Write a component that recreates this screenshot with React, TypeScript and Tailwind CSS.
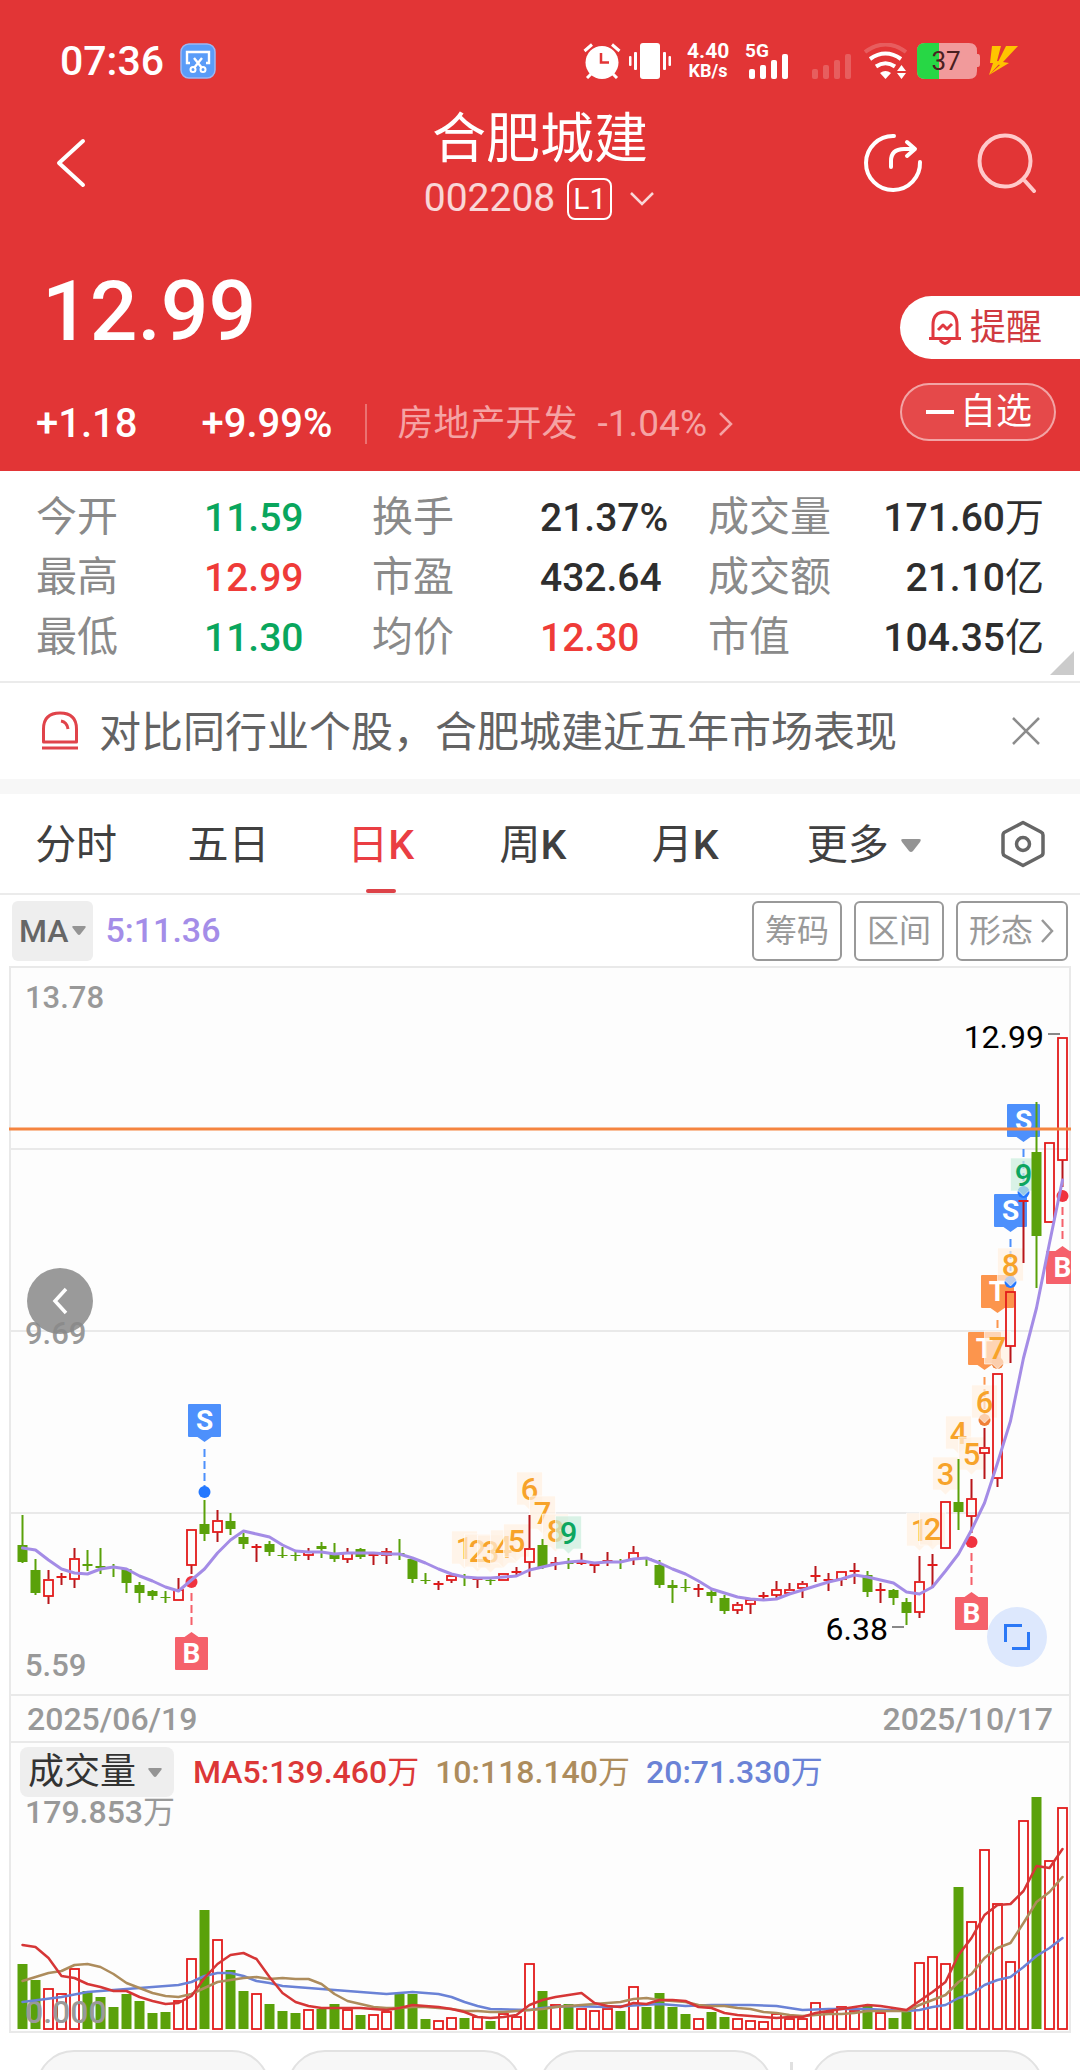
import type { ReactNode } from "react";

type Candle = [up: 0 | 1, top: number, bottom: number, high: number, low: number];
type Point = [index: number, y: number];

const RED = "#e31b1b";
const WICK = "#b8161b";
const GREEN = "#5aa10a";

const xAt = (i: number) => 22.5 + i * 13;

// body top / bottom, high / low, all on the chart's vertical axis
const candles: Candle[] = [
  [0, 1545, 1562, 1515, 1563], [0, 1570, 1593, 1559, 1595], [1, 1579, 1596, 1570, 1604], [1, 1576, 1577, 1573, 1585],
  [1, 1558, 1579, 1548, 1588], [0, 1564, 1566, 1550, 1571], [0, 1566, 1568, 1548, 1574], [0, 1567, 1568, 1564, 1577],
  [0, 1569, 1583, 1568, 1593], [0, 1585, 1593, 1582, 1603], [0, 1591, 1596, 1590, 1600], [0, 1597, 1598, 1591, 1603],
  [1, 1589, 1600, 1578, 1600], [1, 1529, 1565, 1529, 1574], [0, 1524, 1534, 1500, 1541], [1, 1520, 1532, 1510, 1542],
  [0, 1521, 1529, 1513, 1535], [0, 1537, 1544, 1533, 1549], [1, 1546, 1547, 1544, 1562], [0, 1544, 1552, 1541, 1556],
  [0, 1555, 1556, 1547, 1558], [0, 1555, 1556, 1552, 1561], [1, 1551, 1555, 1548, 1560], [0, 1546, 1549, 1542, 1558],
  [0, 1553, 1559, 1543, 1562], [1, 1552, 1559, 1548, 1563], [0, 1549, 1557, 1548, 1559], [1, 1554, 1555, 1554, 1565],
  [1, 1551, 1555, 1548, 1564], [0, 1553, 1554, 1539, 1560], [0, 1559, 1579, 1558, 1583], [0, 1580, 1581, 1573, 1584],
  [1, 1583, 1584, 1581, 1590], [1, 1575, 1580, 1573, 1583], [0, 1576, 1577, 1574, 1586], [1, 1578, 1579, 1577, 1588],
  [0, 1580, 1581, 1577, 1585], [1, 1573, 1580, 1573, 1580], [1, 1571, 1572, 1567, 1577], [1, 1548, 1562, 1515, 1577],
  [0, 1545, 1567, 1539, 1569], [1, 1562, 1564, 1557, 1570], [0, 1563, 1564, 1558, 1569], [1, 1562, 1564, 1553, 1565],
  [1, 1564, 1565, 1563, 1573], [1, 1560, 1561, 1552, 1566], [0, 1561, 1562, 1559, 1569], [1, 1552, 1559, 1546, 1565],
  [0, 1558, 1559, 1557, 1566], [0, 1565, 1585, 1560, 1588], [0, 1585, 1588, 1580, 1603], [0, 1587, 1588, 1579, 1592],
  [1, 1588, 1589, 1584, 1597], [0, 1592, 1596, 1590, 1603], [0, 1598, 1611, 1595, 1614], [1, 1604, 1610, 1602, 1614],
  [1, 1599, 1604, 1598, 1614], [1, 1595, 1596, 1592, 1600], [1, 1589, 1595, 1581, 1598], [1, 1589, 1593, 1583, 1595],
  [1, 1583, 1588, 1581, 1598], [1, 1575, 1576, 1566, 1582], [1, 1579, 1580, 1573, 1591], [1, 1571, 1579, 1571, 1586],
  [1, 1570, 1571, 1563, 1584], [0, 1575, 1592, 1571, 1597], [1, 1589, 1590, 1583, 1603], [0, 1590, 1598, 1589, 1605],
  [0, 1602, 1613, 1598, 1625], [1, 1581, 1612, 1556, 1618], [1, 1564, 1565, 1554, 1588], [1, 1501, 1548, 1501, 1548],
  [0, 1502, 1512, 1459, 1530], [1, 1498, 1516, 1479, 1533], [1, 1447, 1453, 1428, 1479], [1, 1373, 1478, 1373, 1487],
  [1, 1291, 1346, 1291, 1363], [1, 1200, 1201, 1200, 1263], [0, 1152, 1236, 1102, 1288], [1, 1142, 1222, 1142, 1222],
  [1, 1037, 1160, 1037, 1187],
];

const ma5 = [
  1548, 1550, 1560, 1569, 1573, 1574, 1569, 1567, 1569, 1576, 1581, 1587, 1591, 1580, 1569, 1553, 1540, 1531, 1534, 1537,
  1545, 1551, 1552, 1552, 1554, 1553, 1553, 1553, 1554, 1554, 1558, 1563, 1569, 1574, 1577, 1578, 1578, 1577, 1576, 1570,
  1567, 1564, 1562, 1561, 1563, 1562, 1562, 1559, 1558, 1563, 1569, 1574, 1581, 1589, 1593, 1597, 1599, 1600, 1599, 1594,
  1590, 1586, 1582, 1579, 1575, 1577, 1580, 1583, 1592, 1594, 1587, 1571, 1554, 1530, 1503, 1463, 1421, 1358, 1308, 1243,
  1180,
];

const volumeTops = [
  1964, 1980, 1988, 1993, 1968, 1991, 1997, 2007, 1994, 2001, 2013, 2012, 2000, 1958, 1910, 1939, 1970, 1991, 1993, 2004,
  2011, 2013, 2009, 2009, 2004, 2009, 2015, 2014, 2011, 1994, 1994, 2019, 2020, 2017, 2018, 2016, 2021, 2013, 2016, 1963,
  1991, 2004, 2004, 2008, 2010, 2008, 2011, 1986, 2007, 1993, 2007, 2014, 2018, 2012, 2017, 2018, 2020, 2021, 2013, 2018,
  2018, 2002, 2011, 2006, 2010, 2005, 2012, 2018, 2012, 1962, 1956, 1963, 1887, 1921, 1849, 1903, 1961, 1820, 1797, 1860,
  1807,
];

const volumeMa5 = [
  1945, 1947, 1958, 1976, 1978, 1984, 1987, 1991, 1991, 1997, 2001, 2004, 2003, 1996, 1978, 1964, 1955, 1953, 1959, 1977,
  1993, 2002, 2006, 2008, 2008, 2008, 2008, 2009, 2010, 2008, 2005, 2006, 2007, 2009, 2012, 2017, 2018, 2017, 2015, 2005,
  2000, 1997, 1995, 1993, 2003, 2006, 2007, 2003, 2004, 2000, 2000, 2001, 2007, 2008, 2013, 2015, 2016, 2017, 2018, 2017,
  2017, 2013, 2011, 2009, 2007, 2005, 2006, 2008, 2010, 2001, 1992, 1982, 1955, 1938, 1915, 1905, 1904, 1891, 1866, 1868,
  1849,
];

const volumeMa10 = [
  1981, 1977, 1973, 1971, 1965, 1964, 1967, 1974, 1983, 1988, 1993, 1996, 1997, 1994, 1988, 1982, 1980, 1978, 1977, 1979,
  1978, 1979, 1979, 1984, 1994, 2001, 2004, 2007, 2008, 2008, 2007, 2007, 2008, 2009, 2011, 2011, 2012, 2012, 2011, 2010,
  2009, 2007, 2006, 2005, 2004, 2003, 2002, 1999, 1998, 2000, 2001, 2002, 2005, 2006, 2006, 2008, 2009, 2012, 2013, 2015,
  2016, 2015, 2014, 2014, 2013, 2011, 2011, 2011, 2011, 2005, 2000, 1995, 1982, 1974, 1958, 1948, 1943, 1923, 1902, 1892,
  1877,
];

const volumeMa20: Point[] = [
  [0, 2002], [3, 1997], [5, 1992], [7, 1990], [10, 1987], [12, 1985], [13, 1982], [14, 1976], [15, 1973], [16, 1973],
  [17, 1976], [18, 1981], [19, 1983], [20, 1986], [22, 1988], [24, 1990], [26, 1992], [28, 1994], [30, 1992], [32, 1994],
  [33, 1997], [34, 2002], [35, 2006], [36, 2009], [39, 2010], [40, 2008], [42, 2006], [45, 2007], [49, 2004], [51, 2006],
  [53, 2005], [56, 2005], [58, 2006], [60, 2010], [62, 2009], [65, 2009], [68, 2011], [69, 2010], [70, 2007], [71, 2005],
  [72, 1998], [73, 1994], [74, 1985], [75, 1980], [76, 1977], [77, 1967], [78, 1956], [79, 1948], [80, 1938],
];

const sequence: [label: string, index: number, top: number][] = [
  ["1", 34, 1531], ["2", 35, 1534], ["3", 36, 1535], ["4", 37, 1530], ["5", 38, 1524], ["6", 39, 1472], ["7", 40, 1496],
  ["8", 41, 1514], ["9", 42, 1516], ["1", 69, 1513], ["2", 70, 1512], ["3", 71, 1457], ["4", 72, 1416], ["5", 73, 1437],
  ["6", 74, 1385], ["7", 75, 1331], ["8", 76, 1248], ["9", 77, 1158],
];

// S and T flags hang above their dot, B flags stand below it
const flags: { label: string; index: number; dot: number }[] = [
  { label: "S", index: 14, dot: 1492 },
  { label: "B", index: 13, dot: 1582 },
  { label: "B", index: 73, dot: 1542 },
  { label: "T", index: 74, dot: 1420 },
  { label: "T", index: 75, dot: 1363 },
  { label: "S", index: 76, dot: 1282 },
  { label: "S", index: 77, dot: 1192 },
  { label: "B", index: 80, dot: 1196 },
];

const flagColors: Record<string, [string, string]> = {
  S: ["#4d90fc", "#2478ff"],
  T: ["#fc954d", "#f08038"],
  B: ["#f5616b", "#f0323f"],
};

const line = (ys: number[]) => ys.map((y, i) => `${xAt(i)},${y}`).join(" ");
const sparseLine = (points: Point[]) => points.map(([i, y]) => `${xAt(i)},${y}`).join(" ");

function Flag({ label, index, dot }: { label: string; index: number; dot: number }) {
  const x = xAt(index);
  const [fill, dotFill] = flagColors[label];
  const below = label === "B";
  const top = below ? dot + 55 : dot - 88;
  const tip = below
    ? `${x - 7},${top} ${x},${top - 5} ${x + 7},${top}`
    : `${x - 7},${top + 33} ${x},${top + 38} ${x + 7},${top + 33}`;
  return (
    <g>
      <line x1={x} x2={x} y1={below ? dot + 11 : dot - 43} y2={below ? dot + 47 : dot - 4} stroke={fill} strokeWidth={2} strokeDasharray="8 4" />
      <circle cx={x} cy={dot} r={6} fill={dotFill} />
      <rect x={x - 16.5} y={top} width={33} height={33} rx={1} fill={fill} />
      <polygon points={tip} fill={fill} />
      <text x={x} y={top + 26} textAnchor="middle" fontSize={28} fontWeight={700} fill="#fff">{label}</text>
    </g>
  );
}

function SequenceTag({ label, index, top }: { label: string; index: number; top: number }) {
  const x = xAt(index);
  const nine = label === "9";
  return (
    <g>
      <path
        d={`M${x - 13} ${top}h26v33h-8l-5 5l-5 -5h-8z`}
        fill={nine ? "#c9ecdc" : "#fff0e0"}
        fillOpacity={0.7}
        stroke="#fff"
        strokeOpacity={0.6}
        strokeWidth={1}
      />
      <text x={x} y={top + 28} textAnchor="middle" fontSize={31} fontWeight={500} fill={nine ? "#0da65f" : "#f7a32a"}>{label}</text>
    </g>
  );
}

function PriceChart() {
  return (
    <svg viewBox="0 966 1080 730" className="block w-full" fontFamily="Roboto, sans-serif">
      <clipPath id="plot">
        <rect x={9} y={966} width={1062} height={730} />
      </clipPath>
      <rect x={10} y={967} width={1060} height={728} fill="#fdfdfd" stroke="#e9e9e9" strokeWidth={2} />
      {[1149, 1331, 1513].map((y) => (
        <line key={y} x1={10} x2={1070} y1={y} y2={y} stroke="#e9e9e9" strokeWidth={2} />
      ))}

      <g fill="#999" fontSize={31} fontWeight={500}>
        <text x={25} y={1008}>13.78</text>
        <text x={25} y={1344}>9.69</text>
        <text x={25} y={1676}>5.59</text>
      </g>
      <g fill="#000" fontSize={32}>
        <text x={1044} y={1048} textAnchor="end">12.99</text>
        <text x={888} y={1640} textAnchor="end">6.38</text>
      </g>
      <path d="M1048 1034h12M892 1627h12" stroke="#888" strokeWidth={2} />

      <g clipPath="url(#plot)">
        {flags.map((f) => <Flag key={f.index} {...f} />)}
      </g>
      {sequence.map(([label, index, top]) => <SequenceTag key={index} label={label} index={index} top={top} />)}

      {candles.map(([up, top, bottom, high, low], i) => {
        const x = xAt(i);
        if (!up) {
          return (
            <g key={i} fill={GREEN}>
              <rect x={x - 5} y={top} width={10} height={bottom - top} />
              <rect x={x - 1} y={high} width={2} height={low - high} />
            </g>
          );
        }
        return (
          <g key={i}>
            {high < top && <rect x={x - 1} y={high} width={2} height={top - high} fill={WICK} />}
            {low > bottom && <rect x={x - 1} y={bottom} width={2} height={low - bottom} fill={WICK} />}
            {bottom - top <= 2 ? (
              <rect x={x - 5} y={top} width={10} height={2} fill={RED} />
            ) : (
              <rect x={x - 4.5} y={top + 1} width={9} height={bottom - top - 1} fill="none" stroke={RED} strokeWidth={1.8} />
            )}
          </g>
        );
      })}

      <polyline points={line(ma5)} fill="none" stroke="#a48ce6" strokeWidth={3} strokeLinejoin="round" strokeLinecap="round" />
      <line x1={9} x2={1071} y1={1129} y2={1129} stroke="#f5843f" strokeWidth={3} />
    </svg>
  );
}

function VolumeChart() {
  return (
    <svg viewBox="0 1797 1080 237" className="block w-full overflow-visible" fontFamily="Roboto, 'Noto Sans CJK SC', sans-serif">
      <path d="M10 1797V2032H1070V1797" fill="#fdfdfd" stroke="#e9e9e9" strokeWidth={2} />
      <text x={25} y={1823} fill="#999" fontSize={32} fontWeight={500}>
        179.853<tspan fontWeight={400}>万</tspan>
      </text>
      {volumeTops.map((top, i) =>
        candles[i][0] ? (
          <rect key={i} x={xAt(i) - 4.5} y={top + 1} width={9} height={2028 - top} fill="#fff" stroke={RED} strokeWidth={1.8} />
        ) : (
          <rect key={i} x={xAt(i) - 5} y={top} width={10} height={2029 - top} fill={GREEN} />
        ),
      )}
      <text x={25} y={2023} fill="#999" fontSize={32} fontWeight={500}>0.000</text>
      <g fill="none" strokeWidth={2.5} strokeLinejoin="round" strokeLinecap="round">
        <polyline points={sparseLine(volumeMa20)} stroke="#6a82d6" />
        <polyline points={line(volumeMa10)} stroke="#ad8c5c" />
        <polyline points={line(volumeMa5)} stroke="#d63636" />
      </g>
    </svg>
  );
}

function StatusBar() {
  return (
    <div className="flex h-10 items-center justify-between pr-[60px] pl-[60px]">
      <div className="flex items-center gap-4">
        <span className="text-[41px] leading-10 font-medium">07:36</span>
        <svg className="h-9 w-9" viewBox="0 0 36 36" fill="none" stroke="#fff" strokeWidth="2.4">
          <rect x="1" y="1" width="34" height="34" rx="8" fill="#5a9cf8" stroke="#9ab8f5" strokeWidth="1.5" />
          <path d="M10 20H7V9h22v11h-3M14 15l8 10M22 15l-8 10" />
          <circle cx="13" cy="26.500" r="2.500" strokeWidth="2" />
          <circle cx="23" cy="26.500" r="2.500" strokeWidth="2" />
        </svg>
      </div>

      <div className="flex items-center">
        <svg className="h-9 w-[38px]" viewBox="0 0 38 36" fill="none" stroke="#fff" strokeWidth="3">
          <circle cx="19" cy="19.500" r="16.500" fill="#fff" stroke="none" />
          <path d="M1.500 8L9 1.500M36.500 8L29 1.500M8 31l-4 4M30 31l4 4" />
          <path d="M18 10v9.500h8" stroke="#e23536" strokeWidth="2.500" />
        </svg>
        <svg className="ml-2 h-9 w-[42px]" viewBox="0 0 42 36" fill="#fff">
          <rect x="11" width="20" height="36" rx="3" />
          <rect x="5" y="9" width="3" height="18" rx="1" />
          <rect x="34" y="9" width="3" height="18" rx="1" />
          <rect y="13" width="2.500" height="10" rx="1" />
          <rect x="39.500" y="13" width="2.500" height="10" rx="1" />
        </svg>
        <div className="ml-4 w-[42px] text-center text-[21px] leading-5 font-bold">
          <div>4.40</div>
          <div className="text-[18px] leading-5">KB/s</div>
        </div>
        <svg className="ml-[17px] h-9 w-11 overflow-visible" viewBox="0 0 44 36" fill="#fff" fontFamily="Roboto, sans-serif">
          <text x="-1" y="14" fontSize="19" fontWeight="700">5G</text>
          <rect x="3" y="26" width="6" height="10" rx="2" />
          <rect x="14" y="22" width="6" height="14" rx="2" />
          <rect x="25" y="17" width="6" height="19" rx="2" />
          <rect x="36" y="11" width="6" height="25" rx="2" />
        </svg>
        <svg className="ml-[22px] h-9 w-10 opacity-20" viewBox="0 0 40 36" fill="#fff">
          <rect y="26" width="6" height="10" rx="2" />
          <rect x="11" y="22" width="6" height="14" rx="2" />
          <rect x="22" y="17" width="6" height="19" rx="2" />
          <rect x="33" y="11" width="6" height="25" rx="2" />
        </svg>
        <svg className="ml-3 h-9 w-11" viewBox="0 0 44 36" fill="none" stroke="#fff" strokeWidth="4">
          <path d="M1 9Q21.500 -6 42 9" opacity=".2" />
          <path d="M6 16Q21.500 5 37 16M12 23.500Q21.500 17 31 23.500" />
          <path d="M16 30q5.500-4 11 0l-5.500 6z" fill="#fff" stroke="none" />
          <path d="M33 28l4.500-6l4.500 6zM33 30l4.500 6l4.500-6z" fill="#fff" stroke="none" />
        </svg>
        <svg className="ml-[9px] h-9 w-[63px]" viewBox="0 0 63 36" fontFamily="Roboto, sans-serif">
          <path d="M8 0h44q8 0 8 8v3h1q2 0 2 3v7q0 3-2 3h-1v4q0 8-8 8H8q-8 0-8-8V8q0-8 8-8z" fill="#f19a9b" />
          <path d="M8 0h14v36H8q-8 0-8-8V8q0-8 8-8z" fill="#27d745" />
          <text x="29" y="27" textAnchor="middle" fontSize="26" fill="#4a2020">37</text>
        </svg>
        <svg className="ml-2 h-[30px] w-8" viewBox="0 0 32 30" fill="#ffc400">
          <path d="M4 0h9L9 15l4 1L1 29L5 17H2zM18 0h12L15 16l6 1L1 29L12 19l-3-1z" />
        </svg>
      </div>
    </div>
  );
}

function Header() {
  return (
    <header className="bg-[#e23536] pt-[41px] text-white">
      <StatusBar />
      <nav className="flex h-[163px] items-center justify-between px-[43px]">
        <button aria-label="返回" className="w-[174px] pl-3">
          <svg className="h-[52px] w-8" viewBox="0 0 32 52" fill="none" stroke="#fff" strokeWidth="4" strokeLinecap="round" strokeLinejoin="round">
            <path d="M28 4L4 26L28 48" />
          </svg>
        </button>
        <div className="flex flex-col items-center pt-3">
          <h1 className="text-[54px] leading-[60px]">合肥城建</h1>
          <button className="flex h-[58px] items-center text-[39px] text-white/80">
            002208
            <span className="ml-3 flex h-[42px] w-[45px] items-center justify-center rounded-lg border-2 border-white text-[30px] text-white">L1</span>
            <svg className="ml-4 h-4 w-7" viewBox="0 0 28 16" fill="none" stroke="currentColor" strokeWidth="2.500">
              <path d="M3 2l11 11L25 2" />
            </svg>
          </button>
        </div>
        <div className="flex w-[174px] items-center justify-between">
          <button aria-label="分享">
            <svg className="h-[60px] w-[60px]" viewBox="0 0 60 60" fill="none" stroke="#fff" strokeWidth="4" strokeLinecap="round" strokeLinejoin="round">
              <path d="M31 3A27 27 0 1 0 57 29" />
              <path d="M28 34V28Q28 16 41 16H51M44 9l8 7l-8 7" />
            </svg>
          </button>
          <button aria-label="搜索" className="text-[#ffc9ca]">
            <svg className="h-[60px] w-[60px]" viewBox="0 0 60 60" fill="none" stroke="currentColor" strokeWidth="4" strokeLinecap="round">
              <circle cx="28" cy="28" r="25.500" />
              <path d="M48 48l9 10" />
            </svg>
          </button>
        </div>
      </nav>

      <section className="flex justify-between">
        <div className="pt-6 pb-[25px] pl-9">
          <div className="pl-[6px] text-[84px] leading-[88px] font-medium">12.99</div>
          <div className="mt-[46px] flex h-11 items-center">
            <span className="text-[40px] font-medium">+1.18</span>
            <span className="ml-16 text-[40px] font-medium">+9.99%</span>
            <span className="ml-8 h-10 w-[2px] bg-white/30" />
            <a href="#sector" className="ml-[31px] flex items-center text-[36px] text-[#f5a3a4]">
              房地产开发
              <span className="ml-5 text-[37px]">-1.04%</span>
              <svg className="ml-[10px] h-6 w-4" viewBox="0 0 16 24" fill="none" stroke="currentColor" strokeWidth="2.500">
                <path d="M3 1l11 11L3 23" />
              </svg>
            </a>
          </div>
        </div>
        <div className="flex flex-col items-start gap-6 pt-[52px]">
          <button className="flex h-[63px] w-[180px] items-center rounded-l-full bg-white pl-7 text-[36px] text-[#d03a40]">
            <svg className="mr-2 h-9 w-[34px]" viewBox="0 0 34 36" fill="none" stroke="#e0383f" strokeWidth="3" strokeLinejoin="round">
              <path d="M5 28V15Q5 2 17 2Q29 2 29 15V28" />
              <path d="M1 28.500h32M12 30q5 7 10 0" />
              <path d="M10 20l5-5l4 4l5-5" />
            </svg>
            提醒
          </button>
          <button className="flex h-[58px] w-[156px] items-center rounded-full border-2 border-white/50 bg-white/10 pl-6 text-[36px]">
            <span className="mr-[6px] h-1 w-7 bg-white" />
            自选
          </button>
        </div>
      </section>
    </header>
  );
}

const stats: [string, string, string][] = [
  ["今开", "11.59", "text-[#09a65d]"],
  ["换手", "21.37%", "text-[#2e2e2e]"],
  ["成交量", "171.60万", "text-[#2e2e2e]"],
  ["最高", "12.99", "text-[#ef3b38]"],
  ["市盈", "432.64", "text-[#2e2e2e]"],
  ["成交额", "21.10亿", "text-[#2e2e2e]"],
  ["最低", "11.30", "text-[#09a65d]"],
  ["均价", "12.30", "text-[#ef3b38]"],
  ["市值", "104.35亿", "text-[#2e2e2e]"],
];

function Stats() {
  return (
    <section className="relative border-b-2 border-[#ebebeb] px-9 pt-[17px] pb-[13px]">
      <dl className="grid grid-cols-3">
        {stats.map(([label, value, color], i) => (
          <div key={label} className={i % 3 === 2 ? "flex h-[60px] items-center justify-between" : "flex h-[60px] items-center"}>
            <dt className={i % 3 === 2 ? "text-[41px] text-[#8a8a8a]" : "w-1/2 text-[41px] text-[#8a8a8a]"}>{label}</dt>
            <dd className={`text-[39px] font-medium ${color}`}>
              {value.replace(/[万亿]/, "")}
              <span className="font-normal">{value.match(/[万亿]/)?.[0]}</span>
            </dd>
          </div>
        ))}
      </dl>
      <svg className="absolute right-[6px] bottom-[6px] h-6 w-6" viewBox="0 0 24 24" fill="#cbcbcb">
        <path d="M24 0v24H0z" />
      </svg>
    </section>
  );
}

function Notice() {
  return (
    <aside className="flex h-24 items-center pr-[38px] pl-10 text-[42px] text-[#636363]">
      <svg className="h-10 w-10 shrink-0" viewBox="0 0 40 40" fill="none" stroke="#e0434a" strokeWidth="3" strokeLinejoin="round">
        <path d="M3.500 31V18Q3.500 2 20 2Q36.500 2 36.500 18V31z" />
        <path d="M2 37h36M21 10q6 1 7 8" />
      </svg>
      <a href="#compare" className="ml-[19px] flex-1 pt-[2px] whitespace-nowrap">对比同行业个股，合肥城建近五年市场表现</a>
      <button aria-label="关闭">
        <svg className="h-7 w-8" viewBox="0 0 32 28" fill="none" stroke="#8c8c8c" strokeWidth="2.500">
          <path d="M3 1l26 26M29 1L3 27" />
        </svg>
      </button>
    </aside>
  );
}

function Caret({ className }: { className: string }) {
  return (
    <svg className={className} viewBox="0 0 20 13" fill="#949494">
      <path d="M2 0h16q3 0 1 3l-7 9q-2 2-4 0L1 3q-2-3 1-3z" />
    </svg>
  );
}

function Tabs() {
  return (
    <nav className="grid h-[101px] grid-cols-[repeat(5,14.1%)_1fr_auto] border-b-2 border-[#ebebeb] text-[41px] text-[#404040]">
      {["分时", "五日", "日", "周", "月"].map((name, i) => (
        <button key={name} className={i === 2 ? "relative pt-1 text-[#ea3e43]" : "relative pt-1"}>
          {name}
          {i > 1 && <span className="font-medium">K</span>}
          {i === 2 && <span className="absolute bottom-0 left-1/2 h-1 w-[30px] -translate-x-1/2 rounded-full bg-[#dd4248]" />}
        </button>
      ))}
      <button className="flex items-center justify-center gap-3 pt-1">
        更多
        <Caret className="h-[13px] w-5" />
      </button>
      <button aria-label="设置" className="flex w-[114px] items-center justify-center">
        <svg className="h-12 w-11" viewBox="0 0 44 48" fill="none" stroke="#666" strokeWidth="3.500" strokeLinejoin="round">
          <path d="M22 2.500L40 12Q42 13 42 15V33Q42 35 40 36L22 45.500L4 36Q2 35 2 33V15Q2 13 4 12z" />
          <circle cx="22" cy="24" r="6.500" />
        </svg>
      </button>
    </nav>
  );
}

function ToolButton({ children }: { children: ReactNode }) {
  return (
    <button className="flex h-[60px] items-center gap-[6px] rounded-md border-2 border-[#999] px-[11px] text-[32px] text-[#999]">
      {children}
    </button>
  );
}

function Toolbar() {
  return (
    <div className="flex h-[71px] items-center gap-3 px-3">
      <button className="flex h-[60px] items-center gap-1 rounded-md bg-[#eeeeee] px-[7px] text-[32px] font-medium text-[#666]">
        MA
        <Caret className="h-[9px] w-[14px]" />
      </button>
      <span className="flex-1 text-[34px] font-medium text-[#a48de8]">5:11.36</span>
      <ToolButton>筹码</ToolButton>
      <ToolButton>区间</ToolButton>
      <ToolButton>
        形态
        <svg className="h-6 w-4" viewBox="0 0 16 24" fill="none" stroke="currentColor" strokeWidth="2.500">
          <path d="M3 1l10 11L3 23" />
        </svg>
      </ToolButton>
    </div>
  );
}

export default function App() {
  return (
    <main className="flex h-screen flex-col overflow-hidden bg-white font-['Roboto','Noto_Sans_CJK_SC',sans-serif] *:shrink-0">
      <Header />
      <Stats />
      <Notice />
      <div className="h-[15px] bg-[#f7f7f7]" />
      <Tabs />
      <Toolbar />

      <section className="relative">
        <PriceChart />
        <button aria-label="更早" className="absolute top-[302px] left-[27px] flex h-[66px] w-[66px] items-center justify-center rounded-full bg-[#888]/85">
          <svg className="h-7 w-4" viewBox="0 0 16 28" fill="none" stroke="#fff" strokeWidth="3.500">
            <path d="M14 2L3 14l11 12" />
          </svg>
        </button>
        <button aria-label="全屏" className="absolute right-[33px] bottom-[29px] flex h-[60px] w-[60px] items-center justify-center rounded-full bg-[#dde8fd]">
          <svg className="h-7 w-7" viewBox="0 0 28 28" fill="none" stroke="#2b78f6" strokeWidth="3">
            <path d="M2.500 19V2.500H19M9 25.500H25.500V9" />
          </svg>
        </button>
      </section>

      <div className="mx-[9px] flex h-[47px] items-center justify-between border-x-2 border-b-2 border-[#e9e9e9] bg-[#fdfdfd] px-4 text-[32px] font-medium text-[#999]">
        <time>2025/06/19</time>
        <time>2025/10/17</time>
      </div>

      <div className="mx-[9px] flex h-[54px] items-end gap-4 border-x-2 border-[#e9e9e9] bg-[#fdfdfd] pl-[9px] text-[32px] leading-[50px] font-medium">
        <button className="flex h-[50px] items-center gap-3 rounded-lg bg-[#eeeeee] px-2 pr-3 text-[36px] font-normal text-[#333]">
          成交量
          <Caret className="h-[9px] w-[14px]" />
        </button>
        <span className="pl-[3px] text-[#dc3737]">MA5:139.460<span className="font-normal">万</span></span>
        <span className="text-[#ad8c5c]">10:118.140<span className="font-normal">万</span></span>
        <span className="text-[#6a82d6]">20:71.330<span className="font-normal">万</span></span>
      </div>
      <VolumeChart />

      <div className="mt-4 flex gap-[17px] px-9">
        <span className="h-[76px] flex-1 rounded-full border-2 border-[#e2e2e2] bg-[#f7f7f7]" />
        <span className="h-[76px] flex-1 rounded-full border-2 border-[#e2e2e2] bg-[#f7f7f7]" />
        <span className="h-[76px] flex-1 rounded-full border-2 border-[#e2e2e2] bg-[#f7f7f7]" />
        <span className="mt-3 h-12 w-[3px] bg-[#e0e0e0]" />
        <span className="h-[76px] flex-1 rounded-full border-2 border-[#e2e2e2] bg-[#f7f7f7]" />
      </div>
    </main>
  );
}
